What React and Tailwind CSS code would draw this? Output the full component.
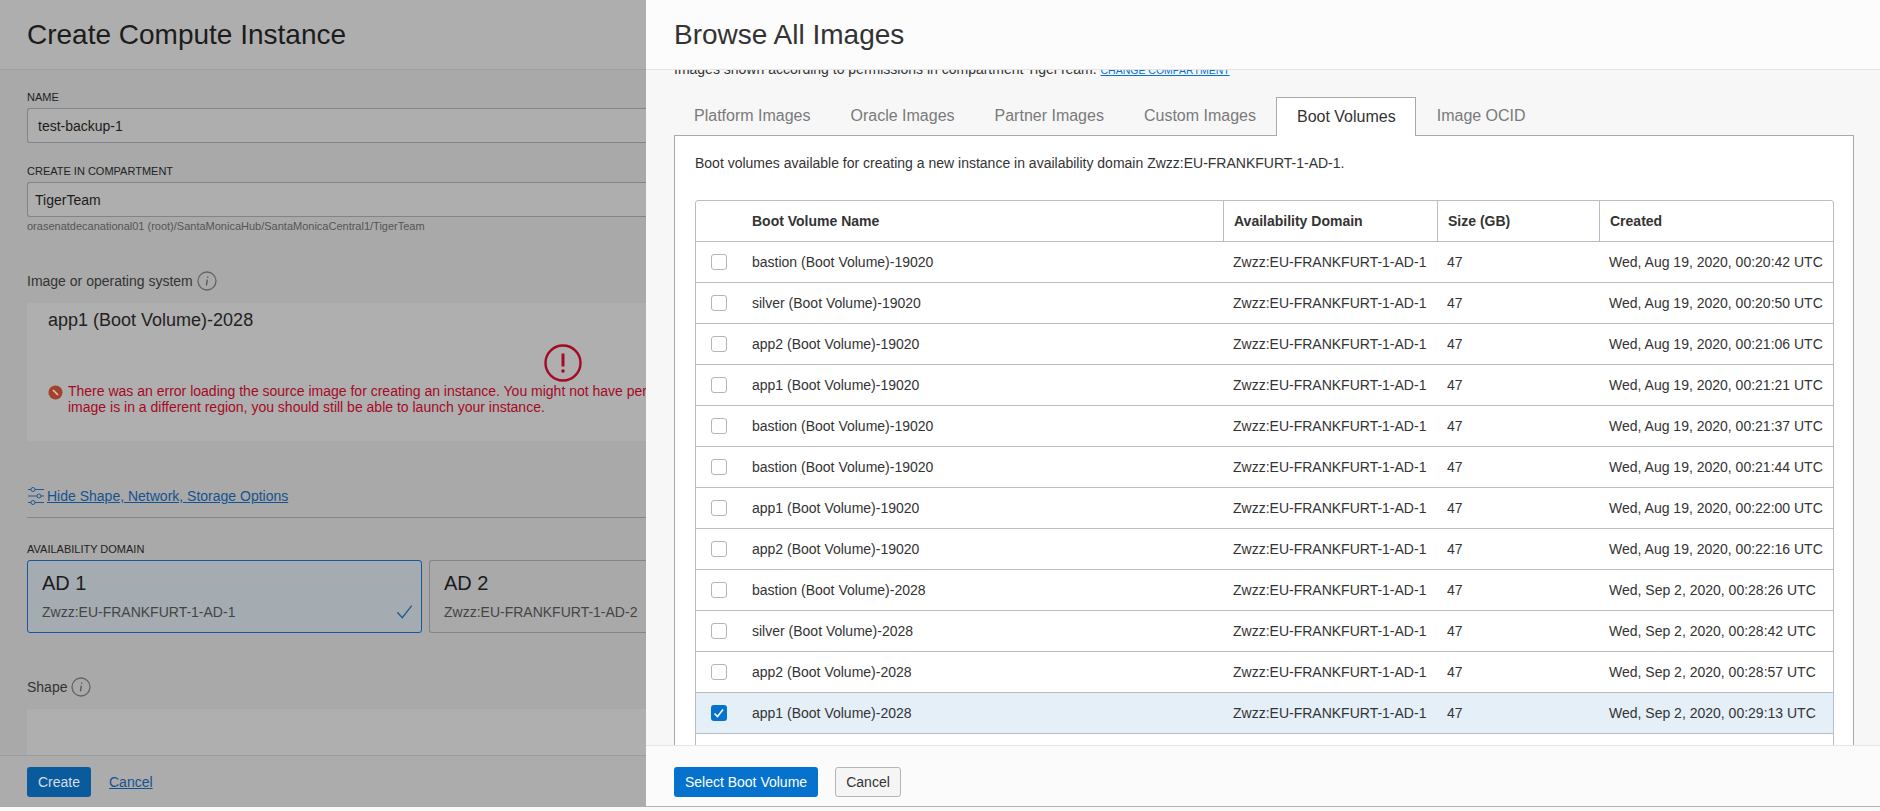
const rows = [
  ["bastion (Boot Volume)-19020", "Wed, Aug 19, 2020, 00:20:42 UTC"],
  ["silver (Boot Volume)-19020", "Wed, Aug 19, 2020, 00:20:50 UTC"],
  ["app2 (Boot Volume)-19020", "Wed, Aug 19, 2020, 00:21:06 UTC"],
  ["app1 (Boot Volume)-19020", "Wed, Aug 19, 2020, 00:21:21 UTC"],
  ["bastion (Boot Volume)-19020", "Wed, Aug 19, 2020, 00:21:37 UTC"],
  ["bastion (Boot Volume)-19020", "Wed, Aug 19, 2020, 00:21:44 UTC"],
  ["app1 (Boot Volume)-19020", "Wed, Aug 19, 2020, 00:22:00 UTC"],
  ["app2 (Boot Volume)-19020", "Wed, Aug 19, 2020, 00:22:16 UTC"],
  ["bastion (Boot Volume)-2028", "Wed, Sep 2, 2020, 00:28:26 UTC"],
  ["silver (Boot Volume)-2028", "Wed, Sep 2, 2020, 00:28:42 UTC"],
  ["app2 (Boot Volume)-2028", "Wed, Sep 2, 2020, 00:28:57 UTC"],
  ["app1 (Boot Volume)-2028", "Wed, Sep 2, 2020, 00:29:13 UTC"],
];

const tabs = ["Platform Images", "Oracle Images", "Partner Images", "Custom Images"];

function InfoIcon() {
  return (
    <svg width="20" height="20" viewBox="0 0 20 20" fill="none" className="shrink-0">
      <circle cx="10" cy="10" r="9" stroke="#636363" strokeWidth="1.3" />
      <path d="M10.7 5.4v1.4M10.3 8.6 9.4 14.4" stroke="#555" strokeWidth="1.3" />
    </svg>
  );
}

function SlidersIcon() {
  return (
    <svg width="18" height="20" viewBox="0 0 18 20" fill="none" stroke="#1d5a94" strokeWidth="1" className="shrink-0">
      <path d="M1 3.5h3M8 3.5h9M1 10h9M14 10h3M1 16.5h3M8 16.5h9" />
      <circle cx="6" cy="3.5" r="2" />
      <circle cx="12" cy="10" r="2" />
      <circle cx="6" cy="16.5" r="2" />
    </svg>
  );
}

function Row({ name, created, selected }) {
  return (
    <div className={`flex h-[41px] shrink-0 items-center border-b border-[#b7bcc5] text-sm text-[#333] ${selected ? "bg-[#e4eff8]" : "bg-white"}`}>
      <div className="flex w-[528px] items-center pl-[15px]">
        {selected ? (
          <span className="flex h-4 w-4 items-center justify-center rounded-[3px] bg-[#0572ce]">
            <svg width="14" height="14" viewBox="0 0 14 14" fill="none" stroke="white" strokeWidth="1.5">
              <path d="M2.5 7.5 5.5 10.5 11 3.5" />
            </svg>
          </span>
        ) : (
          <span className="h-4 w-4 rounded-[3px] border border-[#b5b5b5] bg-white" />
        )}
        <span className="ml-[25px]">{name}</span>
      </div>
      <div className="w-[214px] pl-[9px]">Zwzz:EU-FRANKFURT-1-AD-1</div>
      <div className="w-[162px] pl-[9px]">47</div>
      <div className="pl-[9px]">{created}</div>
    </div>
  );
}

export default function App() {
  return (
    <div className="flex h-[811px] w-[1880px] overflow-hidden bg-[#fafafa] font-['Liberation_Sans',Arial,sans-serif]">
      {/* dimmed page behind the drawer */}
      <div className="flex h-[807px] w-[646px] shrink-0 flex-col overflow-hidden bg-[#a9a9a9] text-[#1c1c1c]">
        <div className="flex h-[70px] shrink-0 items-center border-b border-[#a0a0a0] bg-[#aeaeae] pl-[27px] text-[28px]">
          Create Compute Instance
        </div>

        <div className="flex min-h-0 flex-1 flex-col overflow-hidden pl-[27px]">
          <label className="mt-[20px] text-[11px] leading-[14px] text-[#222]">NAME</label>
          <div className="mt-[4px] flex h-[35px] shrink-0 items-center rounded-l-[3px] border border-r-0 border-[#7f858c] bg-[#aeaeae] pl-[10px] text-sm">
            test-backup-1
          </div>
          <label className="mt-[21px] text-[11px] leading-[14px] text-[#222]">CREATE IN COMPARTMENT</label>
          <div className="mt-[4px] flex h-[35px] shrink-0 items-center rounded-l-[3px] border border-r-0 border-[#7f858c] bg-[#aeaeae] pl-[7px] text-sm">
            TigerTeam
          </div>
          <div className="mt-[2px] text-[11px] leading-[14px] text-[#555]">
            orasenatdecanational01 (root)/SantaMonicaHub/SantaMonicaCentral1/TigerTeam
          </div>

          <div className="mt-[38px] flex h-[20px] shrink-0 items-center gap-[4px] text-sm text-[#333]">
            Image or operating system <InfoIcon />
          </div>

          <div className="mt-[12px] flex h-[138px] shrink-0 flex-col bg-[#afafaf] pl-[21px]">
            <div className="mt-[6px] text-[18px] leading-[22px] text-[#222]">app1 (Boot Volume)-2028</div>
            <div className="mt-[13px] flex h-[38px] shrink-0 justify-end pr-[64px]">
              <svg width="38" height="38" viewBox="0 0 38 38" fill="none">
                <circle cx="19" cy="19" r="17.5" stroke="#a50a25" strokeWidth="2.4" />
                <path d="M19 9.5v13" stroke="#a50a25" strokeWidth="3" />
                <circle cx="19" cy="27" r="1.8" fill="#a50a25" />
              </svg>
            </div>
            <div className="mt-[1px] flex gap-[5px] whitespace-nowrap text-sm leading-4 text-[#a50a25]">
              <svg width="15" height="15" viewBox="0 0 15 15" className="mt-[2px] shrink-0">
                <circle cx="7.5" cy="7.5" r="7" fill="#a3412e" />
                <path d="M5 5l5 5" stroke="#d8c4c0" strokeWidth="1.6" />
              </svg>
              <div>
                There was an error loading the source image for creating an instance. You might not have permission
                <br />
                image is in a different region, you should still be able to launch your instance.
              </div>
            </div>
          </div>

          <div className="mt-[45px] flex h-[20px] shrink-0 items-center gap-[2px] text-sm text-[#14538f]">
            <SlidersIcon />
            <a className="underline">Hide Shape, Network, Storage Options</a>
          </div>
          <div className="mt-[11px] h-px shrink-0 bg-[#858585]" />

          <label className="mt-[24px] text-[11px] leading-[14px] text-[#222]">AVAILABILITY DOMAIN</label>
          <div className="mt-[4px] flex h-[73px] shrink-0 gap-[7px]">
            <div className="relative w-[395px] shrink-0 rounded-[3px] border border-[#15589b] bg-[#a5acb1] pl-[14px]">
              <div className="mt-[10px] text-xl leading-6">AD 1</div>
              <div className="mt-[9px] text-sm leading-4 text-[#444]">Zwzz:EU-FRANKFURT-1-AD-1</div>
              <svg width="18" height="18" viewBox="0 0 18 18" fill="none" stroke="#1d5a94" strokeWidth="1.3" className="absolute bottom-[11px] right-[8px]">
                <path d="M2.3 9.3 7.3 14.7 16.7 2.7" />
              </svg>
            </div>
            <div className="w-[300px] shrink-0 rounded-l-[3px] border border-r-0 border-[#7f858c] pl-[14px]">
              <div className="mt-[10px] text-xl leading-6">AD 2</div>
              <div className="mt-[9px] text-sm leading-4 text-[#444]">Zwzz:EU-FRANKFURT-1-AD-2</div>
            </div>
          </div>

          <div className="mt-[44px] flex h-[20px] shrink-0 items-center gap-[4px] text-sm text-[#333]">
            Shape <InfoIcon />
          </div>
          <div className="mt-[12px] h-[60px] shrink-0 bg-[#afafaf]" />
        </div>

        <div className="flex h-[52px] shrink-0 items-center gap-[18px] border-t border-[#9b9b9b] bg-[#acacac] pl-[27px] text-sm">
          <button className="h-[30px] w-[64px] rounded-[3px] bg-[#0a5a9e] text-[#d5dde5]">Create</button>
          <a className="text-[#14538f] underline">Cancel</a>
        </div>
      </div>

      {/* Browse All Images drawer */}
      <div className="flex h-[807px] min-w-0 flex-1 flex-col border-b border-[#b5b5b5] bg-[#f7f7f7]">
        <div className="flex h-[70px] shrink-0 items-center border-b border-[#e4e4e4] bg-[#fcfcfc] pl-[28px] text-[28px] text-[#333]">
          Browse All Images
        </div>

        <div className="min-h-0 flex-1 overflow-hidden pl-[28px] pr-[26px]">
          <div className="-mt-[11px] flex h-[18px] items-baseline gap-[4px] text-sm text-[#333]">
            Images shown according to permissions in compartment TigerTeam.
            <a className="text-[10.5px] text-[#0572ce] underline">CHANGE COMPARTMENT</a>
          </div>

          <div className="mt-[20px] flex h-[38px] items-stretch text-base text-[#7a7a7a]">
            {tabs.map((t) => (
              <div key={t} className="flex items-center px-[20px] pb-px">{t}</div>
            ))}
            <div className="relative z-10 flex h-[39px] items-center border border-b-0 border-[#aaa] bg-white pl-[20px] pr-[19px] text-[#333]">
              Boot Volumes
            </div>
            <div className="flex items-center pb-px pl-[21px] pr-[20px]">Image OCID</div>
          </div>

          <div className="h-[700px] border border-[#aaa] bg-white pl-[20px] pr-[19px]">
            <div className="mt-[18px] text-sm leading-[18px] text-[#333]">
              Boot volumes available for creating a new instance in availability domain Zwzz:EU-FRANKFURT-1-AD-1.
            </div>
            <div className="mt-[28px] flex flex-col rounded-t-[3px] border border-[#b7bcc5]">
              <div className="flex h-[41px] items-center border-b border-[#b7bcc5] text-sm font-bold text-[#333]">
                <div className="flex h-full w-[528px] items-center border-r border-[#b7bcc5] pl-[56px]">Boot Volume Name</div>
                <div className="flex h-full w-[214px] items-center border-r border-[#b7bcc5] pl-[10px]">Availability Domain</div>
                <div className="flex h-full w-[162px] items-center border-r border-[#b7bcc5] pl-[10px]">Size (GB)</div>
                <div className="pl-[10px]">Created</div>
              </div>
              {rows.map((r, i) => (
                <Row key={i} name={r[0]} created={r[1]} selected={i === rows.length - 1} />
              ))}
              <div className="h-[100px]" />
            </div>
          </div>
        </div>

        <div className="flex h-[61px] shrink-0 items-start gap-[17px] border-t border-[#e6e6e6] bg-[#fbfbfb] pl-[28px] pt-[21px] text-sm">
          <button className="h-[30px] w-[144px] rounded-[3px] bg-[#0572ce] text-white">Select Boot Volume</button>
          <button className="h-[30px] w-[66px] rounded-[3px] border border-[#b5b5b5] bg-[#f5f5f5] text-[#333]">Cancel</button>
        </div>
      </div>
    </div>
  );
}
